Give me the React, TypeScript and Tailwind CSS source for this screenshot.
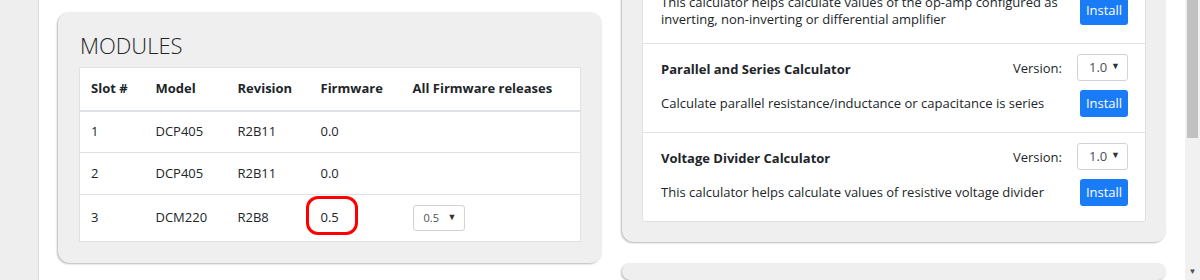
import { FC } from "react";

const font = { fontFamily: '"Open Sans", "Noto Sans", sans-serif' };

interface ModuleRow {
  slot: number;
  model: string;
  revision: string;
  firmware: string;
  releases?: string;
}

const modules: ModuleRow[] = [
  { slot: 1, model: "DCP405", revision: "R2B11", firmware: "0.0" },
  { slot: 2, model: "DCP405", revision: "R2B11", firmware: "0.0" },
  { slot: 3, model: "DCM220", revision: "R2B8", firmware: "0.5", releases: "0.5" },
];

interface Calculator {
  title: string;
  description: string;
}

const calculators: Calculator[] = [
  {
    title: "Operational Amplifier Calculator",
    description:
      "This calculator helps calculate values of the op-amp configured as inverting, non-inverting or differential amplifier",
  },
  {
    title: "Parallel and Series Calculator",
    description: "Calculate parallel resistance/inductance or capacitance is series",
  },
  {
    title: "Voltage Divider Calculator",
    description: "This calculator helps calculate values of resistive voltage divider",
  },
];

const FakeSelect: FC<{ value: string; small?: boolean }> = ({ value, small }) => (
  <div
    className={
      small
        ? "flex items-center justify-between w-[52px] h-[26px] pl-[10px] pr-[7px] border border-[#ced4da] rounded-[3px] bg-white text-[11px] text-[#495057]"
        : "flex items-center justify-between w-[51px] h-[27px] pl-[11px] pr-[7px] border border-[#ced4da] rounded-[3px] bg-white text-[13px] text-[#495057]"
    }
  >
    <span>{value}</span>
    <span className="text-[9px] text-[#333] -mt-[3px]">▼</span>
  </div>
);

const ModulesCard: FC = () => (
  <section className="w-[544px] h-[251px] bg-[#efefef] rounded-[12px] shadow-[-1px_1px_2px_rgba(0,0,0,0.28)] px-[21px] pt-[18px]">
    <h2 className="text-[22px] font-light text-[#212529] leading-[30px] pl-[1px] mb-[7px]">
      MODULES
    </h2>
    <table className="w-[502px] bg-white border border-[#dee2e6] border-collapse text-[13px] text-[#212529]">
      <thead>
        <tr className="h-[43px] border-b-2 border-[#dee2e6] font-bold text-left">
          <th className="pl-[11px] w-[76px] font-bold">Slot #</th>
          <th className="w-[82px] font-bold">Model</th>
          <th className="w-[83px] font-bold">Revision</th>
          <th className="w-[92px] font-bold">Firmware</th>
          <th className="font-bold">All Firmware releases</th>
        </tr>
      </thead>
      <tbody>
        {modules.map((m) => (
          <tr
            key={m.slot}
            className={
              m.releases
                ? "h-[47px] border-t border-[#dee2e6]"
                : "h-[42px] border-t border-[#dee2e6]"
            }
          >
            <td className="pl-[11px]">{m.slot}</td>
            <td>{m.model}</td>
            <td>{m.revision}</td>
            <td>
              <span className="relative">
                {m.firmware}
                {m.releases && (
                  <span className="absolute -left-[15px] -top-[12px] w-[52px] h-[39px] border-[3px] border-[#ff0000] rounded-[12px]" />
                )}
              </span>
            </td>
            <td>{m.releases && <FakeSelect value={m.releases} small />}</td>
          </tr>
        ))}
      </tbody>
    </table>
  </section>
);

const CalculatorsCard: FC = () => (
  <section className="w-[544px] bg-[#efefef] rounded-[12px] shadow-[-1px_1px_2px_rgba(0,0,0,0.28)] p-[20px] -mt-[73px]">
    <ul className="bg-white border border-[#dee2e6] rounded-[3px]">
      {calculators.map((c, i) => (
        <li
          key={c.title}
          className={
            i === 0
              ? "pl-[18px] pr-[17px] pt-[10px] pb-[15px]"
              : "pl-[18px] pr-[17px] pt-[10px] pb-[15px] border-t border-[#dee2e6]"
          }
        >
          <div className="flex items-center justify-between h-[27px]">
            <span className="text-[13px] font-bold text-[#212529] mt-[5px]">{c.title}</span>
            <div className="flex items-center gap-[15px]">
              <span className="text-[13px] text-[#212529] mt-[2px]">Version:</span>
              <FakeSelect value="1.0" />
            </div>
          </div>
          <div className="flex items-center justify-between mt-[9px] min-h-[27px]">
            <p className="w-[405px] text-[13px] leading-[17px] text-[#212529]">
              {c.description}
            </p>
            <button className="h-[27px] w-[48px] bg-[#1a7bf7] rounded-[3px] text-[13px] text-white">
              Install
            </button>
          </div>
        </li>
      ))}
    </ul>
  </section>
);

export default function App() {
  return (
    <div className="w-[1200px] h-[280px] overflow-hidden flex bg-white" style={font}>
      <aside className="w-[39px] shrink-0 bg-[#eeeeee] border-r border-[#dddddd]" />
      <main className="flex-1 flex gap-[20px] pl-[19px]">
        <div className="pt-[12px]">
          <ModulesCard />
        </div>
        <div className="flex flex-col gap-[21px]">
          <CalculatorsCard />
          <section className="w-[544px] h-[60px] bg-[#efefef] rounded-[12px] shadow-[-1px_1px_2px_rgba(0,0,0,0.28)]" />
        </div>
      </main>
      <div className="w-[15px] shrink-0 bg-[#f1f1f1] flex flex-col justify-between items-center">
        <div className="w-[11px] h-[138px] bg-[#c1c1c1]" />
        <span className="text-[8px] text-[#505050] leading-none mb-[5px]">▼</span>
      </div>
    </div>
  );
}
